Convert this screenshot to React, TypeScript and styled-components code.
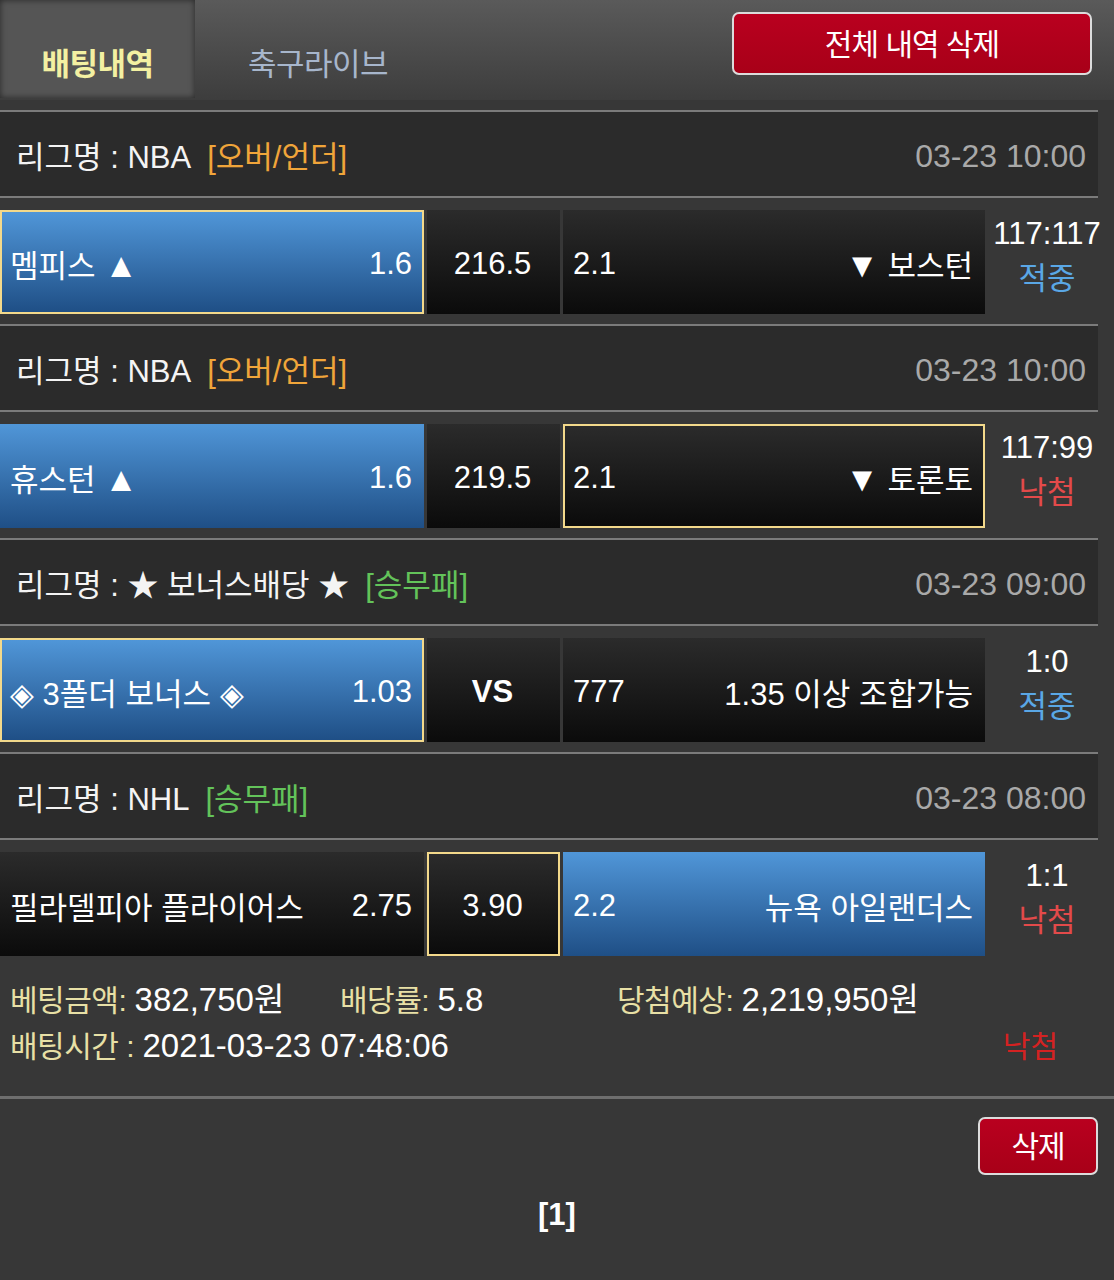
import React from "react";
import styled, { createGlobalStyle } from "styled-components";

const GlobalStyle = createGlobalStyle`
  body {
    margin: 0;
    background: #373737;
    font-family: "Liberation Sans", "Noto Sans CJK KR", sans-serif;
    color: #fff;
  }
`;

const Page = styled.div`
  width: 1114px;
  min-height: 1280px;
  background: #373737;
`;

const TopBar = styled.div`
  height: 100px;
  display: flex;
  background: linear-gradient(#5a5a5a, #3d3d3d);
`;

const Tab = styled.div<{ $active?: boolean; $width: number }>`
  width: ${(p) => p.$width}px;
  height: 98px;
  display: flex;
  align-items: flex-end;
  justify-content: center;
  padding-bottom: 14px;
  box-sizing: border-box;
  font-size: 31px;
  letter-spacing: -0.5px;
  font-weight: ${(p) => (p.$active ? 700 : 400)};
  color: ${(p) => (p.$active ? "#f3f0a2" : "#a7b6cc")};
  background: ${(p) => (p.$active ? "#555" : "transparent")};
  box-shadow: ${(p) =>
    p.$active ? "inset 0 0 6px rgba(0,0,0,0.55)" : "none"};
`;

const RedButton = styled.button<{ $w: number; $h: number }>`
  width: ${(p) => p.$w}px;
  height: ${(p) => p.$h}px;
  background: linear-gradient(#b9001f, #a80018);
  border: 2px solid #dcdcdc;
  border-radius: 7px;
  color: #fff;
  font-family: inherit;
  font-size: 30px;
  letter-spacing: -1px;
  padding: 0 0 4px;
  cursor: pointer;
`;

const TopActions = styled.div`
  margin-left: auto;
  padding: 12px 22px 0 0;
`;

const List = styled.div`
  margin-top: 10px;
`;

const LeagueHeader = styled.div`
  width: 1098px;
  height: 84px;
  border-top: 2px solid #7b7b7b;
  border-bottom: 2px solid #7b7b7b;
  background: #2b2b2b;
  display: flex;
  align-items: center;
  justify-content: space-between;
  font-size: 31px;
`;

const LeagueName = styled.span`
  padding-left: 16px;
  color: #f4f4f4;
`;

const Market = styled.span<{ $color: string }>`
  margin-left: 16px;
  color: ${(p) => p.$color};
`;

const GameTime = styled.span`
  padding-right: 12px;
  padding-top: 4px;
  font-size: 32px;
  color: #a9a9a9;
`;

const MatchRow = styled.div`
  display: grid;
  grid-template-columns: 424px 133px 422px 118px;
  column-gap: 3px;
  padding: 12px 0 10px;
  height: 104px;
`;

const Cell = styled.div<{ $tone: "blue" | "dark"; $picked?: boolean; $center?: boolean }>`
  box-sizing: border-box;
  height: 104px;
  display: flex;
  align-items: center;
  justify-content: ${(p) => (p.$center ? "center" : "space-between")};
  padding: 3px ${(p) => (p.$picked ? 10 : 12)}px 0 ${(p) => (p.$picked ? 8 : 10)}px;
  font-size: 31px;
  color: #fff;
  white-space: nowrap;
  background: ${(p) =>
    p.$tone === "blue"
      ? "linear-gradient(#5096d8, #1f4f86)"
      : "linear-gradient(#2b2b2b, #0b0b0b)"};
  border: ${(p) => (p.$picked ? "2px solid #f3d98b" : "none")};
`;

const Arrow = styled.span`
  font-size: 34px;
`;

const Bold = styled.span`
  font-weight: 700;
`;

const ResultCell = styled.div`
  display: flex;
  flex-direction: column;
  align-items: center;
  justify-content: center;
  gap: 14px;
  font-size: 31px;
  line-height: 1;
  padding-bottom: 12px;
  white-space: nowrap;
`;

const Outcome = styled.span<{ $win: boolean }>`
  color: ${(p) => (p.$win ? "#5aa7e6" : "#e34a4a")};
`;

const Summary = styled.div`
  padding: 11px 0 27px 10px;
  border-bottom: 3px solid #6e6e6e;
  font-size: 30px;
  line-height: 45px;
`;

const SummaryRow = styled.div`
  display: flex;
  align-items: center;
`;

const SummaryItem = styled.span<{ $w?: number }>`
  width: ${(p) => (p.$w ? `${p.$w}px` : "auto")};
`;

const Label = styled.span`
  color: #e8e0a6;
  letter-spacing: -0.5px;
`;

const Value = styled.span`
  font-size: 33px;
`;

const LostMark = styled.span`
  margin-left: auto;
  margin-right: 56px;
  color: #d42222;
`;

const Footer = styled.div`
  display: flex;
  flex-direction: column;
  padding-top: 18px;
`;

const FooterActions = styled.div`
  display: flex;
  justify-content: flex-end;
  padding-right: 16px;
`;

const Pager = styled.div`
  text-align: center;
  font-weight: 700;
  font-size: 31px;
  margin-top: 22px;
`;

type Side = { text: React.ReactNode; odds: string; tone: "blue" | "dark"; picked?: boolean };

type Game = {
  league: React.ReactNode;
  market: string;
  marketColor: string;
  time: string;
  home: Side;
  mid: { text: React.ReactNode; tone: "blue" | "dark"; picked?: boolean };
  away: Side;
  score: string;
  win: boolean;
};

const games: Game[] = [
  {
    league: "리그명 : NBA",
    market: "[오버/언더]",
    marketColor: "#f0a53a",
    time: "03-23 10:00",
    home: { text: <>멤피스 <Arrow>▲</Arrow></>, odds: "1.6", tone: "blue", picked: true },
    mid: { text: "216.5", tone: "dark" },
    away: { text: <><Arrow>▼</Arrow> 보스턴</>, odds: "2.1", tone: "dark" },
    score: "117:117",
    win: true,
  },
  {
    league: "리그명 : NBA",
    market: "[오버/언더]",
    marketColor: "#f0a53a",
    time: "03-23 10:00",
    home: { text: <>휴스턴 <Arrow>▲</Arrow></>, odds: "1.6", tone: "blue" },
    mid: { text: "219.5", tone: "dark" },
    away: { text: <><Arrow>▼</Arrow> 토론토</>, odds: "2.1", tone: "dark", picked: true },
    score: "117:99",
    win: false,
  },
  {
    league: "리그명 : ★ 보너스배당 ★",
    market: "[승무패]",
    marketColor: "#63c35a",
    time: "03-23 09:00",
    home: { text: "◈ 3폴더 보너스 ◈", odds: "1.03", tone: "blue", picked: true },
    mid: { text: <Bold>VS</Bold>, tone: "dark" },
    away: { text: "1.35 이상 조합가능", odds: "777", tone: "dark" },
    score: "1:0",
    win: true,
  },
  {
    league: "리그명 : NHL",
    market: "[승무패]",
    marketColor: "#63c35a",
    time: "03-23 08:00",
    home: { text: "필라델피아 플라이어스", odds: "2.75", tone: "dark" },
    mid: { text: "3.90", tone: "dark", picked: true },
    away: { text: "뉴욕 아일랜더스", odds: "2.2", tone: "blue" },
    score: "1:1",
    win: false,
  },
];

const App: React.FC = () => {
  return (
    <Page>
      <GlobalStyle />
      <TopBar>
        <Tab $active $width={195}>배팅내역</Tab>
        <Tab $width={246}>축구라이브</Tab>
        <TopActions>
          <RedButton $w={360} $h={63}>전체 내역 삭제</RedButton>
        </TopActions>
      </TopBar>

      <List>
        {games.map((g, i) => (
          <div key={i}>
            <LeagueHeader>
              <LeagueName>
                {g.league}
                <Market $color={g.marketColor}>{g.market}</Market>
              </LeagueName>
              <GameTime>{g.time}</GameTime>
            </LeagueHeader>
            <MatchRow>
              <Cell $tone={g.home.tone} $picked={g.home.picked}>
                <span>{g.home.text}</span>
                <span>{g.home.odds}</span>
              </Cell>
              <Cell $tone={g.mid.tone} $picked={g.mid.picked} $center>
                {g.mid.text}
              </Cell>
              <Cell $tone={g.away.tone} $picked={g.away.picked}>
                <span>{g.away.odds}</span>
                <span>{g.away.text}</span>
              </Cell>
              <ResultCell>
                <span>{g.score}</span>
                <Outcome $win={g.win}>{g.win ? "적중" : "낙첨"}</Outcome>
              </ResultCell>
            </MatchRow>
          </div>
        ))}
      </List>

      <Summary>
        <SummaryRow>
          <SummaryItem $w={330}>
            <Label>베팅금액:</Label> <Value>382,750원</Value>
          </SummaryItem>
          <SummaryItem $w={277}>
            <Label>배당률:</Label> <Value>5.8</Value>
          </SummaryItem>
          <SummaryItem>
            <Label>당첨예상:</Label> <Value>2,219,950원</Value>
          </SummaryItem>
        </SummaryRow>
        <SummaryRow>
          <SummaryItem>
            <Label>배팅시간 :</Label> <Value>2021-03-23 07:48:06</Value>
          </SummaryItem>
          <LostMark>낙첨</LostMark>
        </SummaryRow>
      </Summary>

      <Footer>
        <FooterActions>
          <RedButton $w={120} $h={58}>삭제</RedButton>
        </FooterActions>
        <Pager>[1]</Pager>
      </Footer>
    </Page>
  );
};

export default App;
